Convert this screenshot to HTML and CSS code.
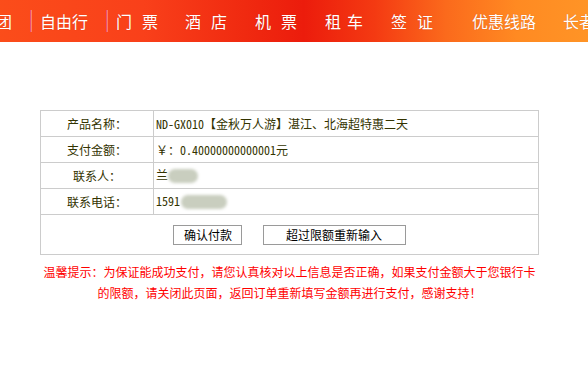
FILE: index.html
```html
<!DOCTYPE html>
<html lang="zh-CN">
<head>
  <meta charset="UTF-8">
  <meta name="viewport" content="width=device-width, initial-scale=1.0">
  <title>确认付款</title>
  <link rel="stylesheet" href="styles.css">
</head>
<body>
  <div class="topnav">
    <span class="nav-item">团</span>
    <span class="nav-sep"></span>
    <span class="nav-item">自由行</span>
    <span class="nav-sep"></span>
    <span class="nav-item w69 wide">门票</span>
    <span class="nav-item w70 wide">酒店</span>
    <span class="nav-item w70 wide">机票</span>
    <span class="nav-item w66 narrow">租车</span>
    <span class="nav-item w81 wide">签证</span>
    <span class="nav-item w91">优惠线路</span>
    <span class="nav-item">长者游</span>
  </div>

  <div class="main">
    <table class="pay">
      <tr>
        <td class="label">产品名称：</td>
        <td class="value">ND-GX010【金秋万人游】湛江、北海超特惠二天</td>
      </tr>
      <tr>
        <td class="label">支付金额：</td>
        <td class="value">￥：0.40000000000001元</td>
      </tr>
      <tr>
        <td class="label">联系人：</td>
        <td class="value">兰<span class="blur short"></span></td>
      </tr>
      <tr>
        <td class="label">联系电话：</td>
        <td class="value">1591<span class="blur long"></span></td>
      </tr>
      <tr>
        <td class="actions" colspan="2">
          <button class="btn btn-pay">确认付款</button>
          <button class="btn btn-retry">超过限额重新输入</button>
        </td>
      </tr>
    </table>

    <p class="tip">温馨提示：为保证能成功支付，请您认真核对以上信息是否正确，如果支付金额大于您银行卡的限额，请关闭此页面，返回订单重新填写金额再进行支付，感谢支持！</p>
  </div>
</body>
</html>
```

FILE: styles.css
```css
body {
  margin: 0;
  padding: 0;
  background-color: #fff;
  font-family: "Noto Sans CJK SC", sans-serif;
  overflow: hidden;
}

/* top navigation band */
.topnav {
  display: flex;
  align-items: center;
  height: 42px;
  margin-left: -4px;
  white-space: nowrap;
  overflow: hidden;
  background: linear-gradient(to right, #fb4d1a 0%, #f9401a 25%, #f02a10 42%, #ec1c0c 52%, #f43a12 64%, #fb6a1c 76%, #ff8a22 88%, #ff9426 100%);
}

.nav-item {
  flex-shrink: 0;
  color: #fff;
  font-size: 16px;
  line-height: 20px;
  text-shadow: 0 0 1px rgba(150, 20, 0, 0.4);
}

.nav-sep {
  flex-shrink: 0;
  width: 1px;
  height: 22px;
  margin: 0 9px 0 18px;
  background-color: #e8507a;
  box-shadow: 1px 0 0 rgba(255, 170, 150, 0.6);
}

.wide {
  letter-spacing: 10px;
}

.narrow {
  letter-spacing: 6px;
}

.w66 { width: 66px; }
.w69 { width: 69px; }
.w70 { width: 70px; }
.w81 { width: 81px; }
.w91 { width: 91px; }

/* payment table */
.main {
  width: 499px;
  margin: 68px 0 0 40px;
}

.pay {
  width: 499px;
  border-collapse: collapse;
  font-family: "Noto Sans Mono CJK SC", "Noto Sans CJK SC", monospace;
  font-size: 12px;
  color: #333300;
}

.pay td {
  height: 25px;
  padding: 0;
  border: 1px solid #cccccc;
  line-height: 14px;
}

.pay .label {
  width: 112px;
  text-align: center;
}

.pay .value {
  padding-left: 2px;
}

.pay .actions {
  height: 39px;
  text-align: center;
}

.blur {
  display: inline-block;
  height: 14px;
  vertical-align: middle;
  border-radius: 8px;
  background-color: #c9cebf;
  filter: blur(1.5px);
}

.blur.short {
  width: 30px;
}

.blur.long {
  width: 46px;
  margin-left: 1px;
}

.btn {
  height: 20px;
  padding: 0;
  margin: 0 7px;
  border: 1px solid #9a9a9a;
  background-color: #fff;
  color: #000;
  font-family: "Noto Sans CJK SC", sans-serif;
  font-size: 12px;
  line-height: 16px;
  vertical-align: middle;
}

.btn-pay {
  width: 69px;
}

.btn-retry {
  width: 143px;
}

.tip {
  margin: 6px 0 0;
  color: #ff0000;
  font-size: 12px;
  line-height: 21px;
  text-align: center;
}
```
